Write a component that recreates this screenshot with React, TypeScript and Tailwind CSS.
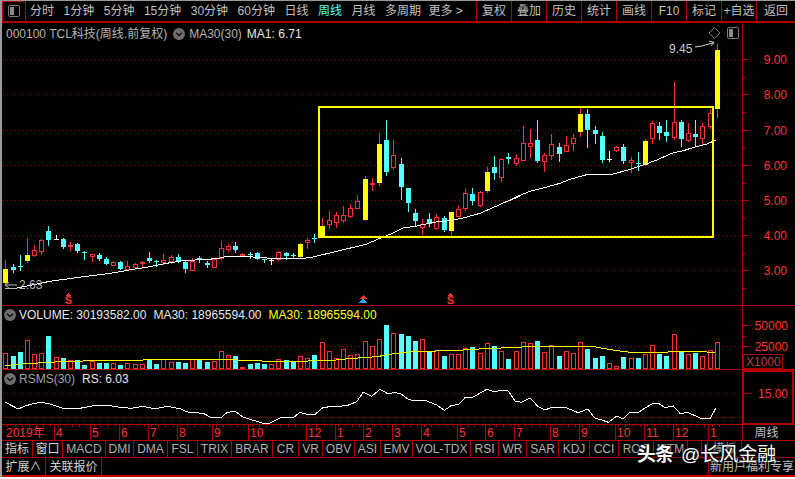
type CandleKind = 'y' | 'c' | 'r' | 'w';
type Row = [CandleKind, number, number, number, number];

// values were read off in 3x pixels, so each block keeps its own y origin
const block1: Row[] = [
  ['y',150,177,218,218],['c',162,172,180,186],['c',135,168,172,180],['y',84,135,152,155],['r',105,120,136,138],
  ['r',88,91,124,131],['c',48,63,90,105],['w',75,86,88,88],['c',85,87,110,114],['r',97,104,107,120],
  ['c',100,102,124,126],['c',124,126,128,146],['r',132,133,139,152],['c',130,135,147,150],['c',142,148,161,162],
  ['r',152,156,164,165],['c',153,156,176,178],['r',154,169,176,178],['r',160,161,171,175],['r',152,156,160,170],
  ['c',127,145,153,155],['c',150,152,154,168],['r',132,150,156,162],['r',135,142,152,160],['c',132,141,153,156],
  ['c',152,155,177,186],['r',143,152,179,180],['c',138,145,151,156],['c',152,160,165,171],['r',146,148,170,171],
  ['r',94,115,145,147],['r',103,108,117,124],['c',97,108,120,125],['r',128,131,134,138],['c',126,132,134,144],
  ['c',127,129,146,148],['c',147,148,150,156],['w',146,150,151,162],['r',124,127,147,149],['c',126,130,137,147],
  ['c',130,134,137,145],['y',100,103,141,142],['r',85,90,97,113],
];
const block2: Row[] = [
  ['c',402,414,418,425],['y',354,378,408,408],['r',333,361,371,384],['r',337,345,365,381],['r',318,345,359,365],
  ['r',312,324,347,350],['r',285,304,323,325],['y',228,237,360,360],['r',234,249,253,270],['y',99,132,249,255],
  ['c',60,120,216,225],['r',120,165,200,207],['c',174,192,261,297],['c',264,264,309,333],['c',327,339,363,378],
  ['r',357,372,380,402],['c',339,357,372,378],['r',342,351,384,387],['c',348,354,390,393],['y',336,336,393,408],
  ['r',318,327,347,349],['r',267,279,324,330],['c',264,282,303,312],['r',273,276,315,318],['y',201,216,273,276],
  ['c',168,201,219,237],['r',174,177,231,243],['c',159,171,177,189],
];
const block3: Row[] = [
  ['r',222,235,248,255],['r',138,189,239,240],['r',147,189,197,231],['c',120,180,243,246],['r',219,225,243,273],
  ['r',162,192,225,237],['c',189,201,222,243],['r',168,195,213,213],['r',162,174,189,210],['y',84,102,156,168],
  ['c',87,102,150,201],['c',138,150,162,189],['c',156,168,240,246],['w',213,238,240,243],['r',198,201,210,213],
  ['c',192,201,243,249],['r',231,240,246,276],['c',216,249,252,270],['y',177,183,255,255],['r',123,130,173,189],
  ['c',126,138,159,177],['c',120,156,168,183],['r',6,126,171,177],['c',120,126,177,198],['r',129,160,180,183],
  ['c',120,162,171,195],['r',129,138,174,192],['r',87,99,138,144],
];

const toPx = (rows: Row[], origin: number): Row[] =>
  rows.map(([k, a, b, c, d]) => [
    k,
    Math.round(origin + a / 3),
    Math.round(origin + b / 3),
    Math.round(origin + c / 3),
    Math.round(origin + d / 3),
  ]);

const candles: Row[] = [
  ...toPx(block1, 210),
  ...toPx(block2, 100),
  ...toPx(block3, 80),
  ['y', 44, 50, 109, 117],
];

const RED = '#ff3232';
const CYAN = '#54ffff';
const YELLOW = '#ffff00';
const LINE = '#b00000';
const DOT = '#a00000';

const xAt = (i: number) => Math.round(5.33 + 7.186 * i);

const maLine = [
  ...[[16,235],[46,235],[100,224],[150,214],[200,207],[250,200],[300,194],[350,187],[400,178],[450,170],[500,160],[550,152],[600,149],[650,146],[680,139],[730,140],[760,141],[800,144],[850,147],[890,146],[930,143]].map(([x, y]) => [x / 3, 210 + y / 3]),
  ...[[168,433],[210,415],[240,403],[280,384],[320,378],[370,367],[420,362],[460,354],[510,340],[560,318],[600,300],[630,289]].map(([x, y]) => [310 + x / 3, 100 + y / 3]),
  ...[[0,361],[30,346],[60,334],[100,324],[150,310],[180,298],[230,284],[300,284],[340,274],[370,265],[400,255],[440,240],[490,218],[520,212],[545,204],[590,192],[617,181]].map(([x, y]) => [510 + x / 3, 80 + y / 3]),
];

const volumes: [CandleKind, number][] = [
  ['r',160],['c',168],['c',156],['r',120],['r',163],['r',160],['c',108],['r',172],['c',175],['r',181],
  ['c',180],['c',195],['r',184],['c',189],['c',189],['r',189],['c',195],['r',189],['r',192],['r',192],
  ['c',177],['c',192],['r',178],['r',186],['c',186],['c',189],['r',178],['c',178],['c',186],['r',184],
  ['r',154],['r',166],['c',168],['y',201],['c',192],['c',189],['c',192],['r',192],['r',178],['c',181],
  ['c',184],['r',168],['r',174],['c',165],['r',127],['r',153],['r',175],['r',148],['r',166],['r',162],
  ['r',124],['r',138],['r',118],['c',75],['r',100],
  ['c',102],['c',108],['c',123],['r',118],['c',155],['r',150],['c',168],['r',162],['r',162],['r',145],
  ['c',141],['r',160],['r',130],['c',138],['r',153],['c',177],['r',153],['r',127],['r',130],['c',123],
  ['r',156],['r',135],['c',168],['r',153],['r',159],['r',127],['c',147],['c',174],['c',168],['r',190],
  ['r',199],['c',171],['r',175],['c',174],['r',162],['r',135],['c',162],['c',168],['r',102],['c',154],
  ['r',162],['c',159],['r',168],['r',150],['r',127],
];

const volMa = [
  ...[[16,197],[50,193],[100,190],[150,187],[200,184],[300,182],[400,181],[500,178],[700,178],[720,181],[780,182],[790,184],[900,184],[950,182],[1000,181],[1060,175],[1130,170],[1170,163]].map(([x, y]) => [x / 3, 300 + y / 3]),
  ...[[0,161],[30,157],[70,154],[180,152],[230,148],[300,145],[400,140],[590,139],[630,146],[680,154],[720,158],[820,156],[910,155],[960,157]].map(([x, y]) => [395 + x / 3, 300 + y / 3]),
];

const rsLine = [
  ...[[16,307],[30,314],[55,327],[75,318],[100,311],[125,307],[150,312],[190,325],[240,325],[280,317],[330,317],[360,322],[395,325],[430,319],[465,327],[500,319],[540,326],[565,337],[610,340],[630,351],[665,352],[680,338],[705,333],[730,352],[790,370],[810,369],[840,354],[880,353],[900,337],[920,343],[945,343],[970,322],[1040,317],[1070,305],[1090,276],[1115,289],[1140,268],[1165,282]].map(([x, y]) => [x / 3, 300 + y / 3]),
  ...[[0,277],[20,283],[40,298],[60,303],[90,301],[125,315],[148,331],[170,316],[190,314],[210,293],[235,291],[275,268],[300,276],[320,270],[340,273],[360,303],[380,307],[405,294],[430,320],[450,330],[470,322],[510,322],[550,338],[578,327],[600,355],[620,360],[640,367],[665,348],[685,357],[705,337],[730,337],[770,312],[790,310],[810,323],[835,318],[855,340],[880,338],[920,356],[945,357],[962,325]].map(([x, y]) => [395 + x / 3, 300 + y / 3]),
];

const pts = (list: number[][]) => list.map(([x, y]) => `${x.toFixed(1)},${y.toFixed(1)}`).join(' ');

const periods = ['分时', '1分钟', '5分钟', '15分钟', '30分钟', '60分钟', '日线', '周线', '月线', '多周期'];
const actions = ['复权', '叠加', '历史', '统计', '画线', 'F10', '标记', '+自选'];

const tabs = [
  { label: '指标', w: 'w-[31px]', bright: true },
  { label: '窗口', w: 'w-[30px]', bright: true },
  { label: 'MACD', w: 'w-[43px]' },
  { label: 'DMI', w: 'w-[28px]' },
  { label: 'DMA', w: 'w-[34px]' },
  { label: 'FSL', w: 'w-[30px]' },
  { label: 'TRIX', w: 'w-[34px]' },
  { label: 'BRAR', w: 'w-[41px]' },
  { label: 'CR', w: 'w-[26px]' },
  { label: 'VR', w: 'w-[24px]' },
  { label: 'OBV', w: 'w-[32px]' },
  { label: 'ASI', w: 'w-[26px]' },
  { label: 'EMV', w: 'w-[32px]' },
  { label: 'VOL-TDX', w: 'w-[58px]' },
  { label: 'RSI', w: 'w-[28px]' },
  { label: 'WR', w: 'w-[28px]' },
  { label: 'SAR', w: 'w-[32px]' },
  { label: 'KDJ', w: 'w-[31px]' },
  { label: 'CCI', w: 'w-[29px]' },
  { label: 'ROC', w: 'w-[35px]' },
  { label: 'MTM', w: 'w-[34px]' },
  { label: '', w: 'w-[14px]' },
  { label: '', w: 'w-[6px]' },
  { label: '模板', w: 'w-[34px]' },
];

const months: [string, number][] = [
  ['4',54],['5',90],['6',119],['7',148],['8',177],['9',212],['10',248],['12',306],['1',335],['2',363],['3',392],
  ['4',421],['5',457],['6',485],['7',514],['8',550],['9',579],['10',615],['11',644],['12',673],['1',708],
];

function CircleChevron() {
  return (
    <svg width="12" height="12" viewBox="0 0 12 12" className="shrink-0">
      <circle cx="6" cy="6" r="6" fill="#6e6e6e" />
      <path d="M3 4.8 6 7.6 9 4.8" fill="none" stroke="#111" strokeWidth="1.4" />
    </svg>
  );
}

function PanelIcon({ size = 12 }: { size?: number }) {
  return (
    <svg width={size} height={size} viewBox="0 0 12 12" className="shrink-0">
      <rect x="0.5" y="0.5" width="11" height="11" rx="1.5" fill="none" stroke="#7a7a7a" />
      <rect x="2" y="2" width="4" height="8" fill="#8a8a8a" />
    </svg>
  );
}

function Candle({ row, i }: { row: Row; i: number }) {
  const [kind, hi, top, bot, lo] = row;
  const x = xAt(i);
  const wick = kind === 'c' ? CYAN : kind === 'w' ? '#ffffff' : RED;
  if (kind === 'w') {
    return (
      <g>
        <rect x={x} y={hi} width="1" height={lo - hi + 1} fill={wick} />
        <rect x={x - 2} y={top} width="5" height="1" fill={wick} />
      </g>
    );
  }
  return (
    <g>
      <rect x={x} y={hi} width="1" height={lo - hi + 1} fill={wick} />
      {kind === 'r' ? (
        <rect x={x - 1.5} y={top + 0.5} width="4" height={Math.max(bot - top, 1)} fill="#000" stroke={RED} />
      ) : (
        <rect x={x - 2} y={top} width="5" height={Math.max(bot - top, 1)} fill={kind === 'y' ? YELLOW : CYAN} />
      )}
    </g>
  );
}

function MainChart() {
  return (
    <svg viewBox="2 23 793 282" className="h-full w-full" shapeRendering="crispEdges">
      {[59, 94, 130, 165, 200, 235, 270].map((y) => (
        <line key={y} x1="3" x2="742" y1={y + 0.5} y2={y + 0.5} stroke={DOT} strokeDasharray="1 3" />
      ))}
      <line x1="742.5" x2="742.5" y1="23" y2="305" stroke={LINE} />
      {[
        ['9.00', 59], ['8.00', 94], ['7.00', 130], ['6.00', 165], ['5.00', 200], ['4.00', 235], ['3.00', 270],
      ].map(([t, y]) => (
        <g key={t}>
          <line x1="743" x2="749" y1={Number(y) + 0.5} y2={Number(y) + 0.5} stroke={LINE} />
          <line x1="743" x2="746" y1={Number(y) + 18.5} y2={Number(y) + 18.5} stroke={LINE} />
          <text x="787" y={Number(y) + 4.5} textAnchor="end" fontSize="12" fill={RED} shapeRendering="auto">{t}</text>
        </g>
      ))}
      {candles.map((row, i) => (
        <Candle key={i} row={row} i={i} />
      ))}
      <polyline points={pts(maLine)} fill="none" stroke="#ffffff" strokeWidth="1" />
      <rect x="319" y="107" width="393.5" height="130" fill="none" stroke={YELLOW} strokeWidth="2" />

      <text x="669" y="53" fontSize="12" fill="#c8c8c8" shapeRendering="auto">9.45</text>
      <path d="M695 47 702 46 714 42.5 709 41M714 42.5 711 46" fill="none" stroke="#d8d8d8" shapeRendering="auto" />
      <path d="M714.5 27.5 720 33 714.5 38.5 709 33Z" fill="none" stroke="#7a7a7a" shapeRendering="auto" />

      <path d="M5 285H17M5 285 9 282M5 285 9 288M5 288.5H16" fill="none" stroke="#b8b8b8" shapeRendering="auto" />
      <text x="19" y="289" fontSize="12" fill="#b8b8b8" shapeRendering="auto">2.63</text>

      <g fill={RED}>
        <polygon points="68.5,293 71,296 66,296" />
        <text x="68.5" y="304" fontSize="11" fontWeight="700" textAnchor="middle" shapeRendering="auto">S</text>
        <polygon points="450.5,293 453,296 448,296" />
        <text x="450.5" y="304" fontSize="11" fontWeight="700" textAnchor="middle" shapeRendering="auto">S</text>
        <polygon points="363,295 367,299 359,299" />
      </g>
      <polygon points="363,299 367.5,303 358.5,303" fill="#2aa8ff" />
    </svg>
  );
}

function VolumeChart() {
  const base = 369;
  return (
    <svg viewBox="2 306 793 63" className="h-full w-full" shapeRendering="crispEdges">
      <line x1="3" x2="742" y1="346.5" y2="346.5" stroke={DOT} strokeDasharray="1 3" />
      <line x1="742.5" x2="742.5" y1="306" y2="369" stroke={LINE} />
      {volumes.map(([kind, v], i) => {
        const top = Math.round(300 + v / 3);
        const x = xAt(i);
        if (kind === 'r') {
          return <rect key={i} x={x - 1.5} y={top + 0.5} width="4" height={base - top - 1} fill="#000" stroke={RED} />;
        }
        return <rect key={i} x={x - 2} y={top} width="5" height={base - top} fill={kind === 'c' ? CYAN : RED} />;
      })}
      <polyline points={pts(volMa)} fill="none" stroke={YELLOW} strokeWidth="1" />
      <line x1="743" x2="749" y1="325.5" y2="325.5" stroke={LINE} />
      <line x1="743" x2="746" y1="336.5" y2="336.5" stroke={LINE} />
      <line x1="743" x2="749" y1="346.5" y2="346.5" stroke={LINE} />
      <text x="788" y="329.5" textAnchor="end" fontSize="12" fill={RED} shapeRendering="auto">50000</text>
      <text x="788" y="351" textAnchor="end" fontSize="12" fill={RED} shapeRendering="auto">25000</text>
      <rect x="743.5" y="354.5" width="39" height="14" fill="#000" stroke={LINE} />
      <text x="746" y="366" fontSize="12" fill="#b84040" shapeRendering="auto">X1000</text>
    </svg>
  );
}

function RsChart() {
  return (
    <svg viewBox="2 370 793 54" className="h-full w-full" shapeRendering="crispEdges">
      <line x1="3" x2="742" y1="393.5" y2="393.5" stroke={DOT} strokeDasharray="1 3" />
      <line x1="3" x2="742" y1="417.5" y2="417.5" stroke={DOT} strokeDasharray="1 1" />
      <polyline points={pts(rsLine)} fill="none" stroke="#ffffff" strokeWidth="1" />
      <rect x="743" y="370.5" width="50" height="53" fill="none" stroke={LINE} strokeWidth="2" />
      <line x1="744" x2="750" y1="393.5" y2="393.5" stroke={LINE} />
      <text x="788" y="398" textAnchor="end" fontSize="12" fill={RED} shapeRendering="auto">15.00</text>
    </svg>
  );
}

function DateAxis() {
  return (
    <svg viewBox="2 426 740 15" className="h-full w-full" shapeRendering="crispEdges">
      {candles.map((_, i) => (
        <rect key={i} x={xAt(i) + 2} y="426" width="1" height="2" fill={LINE} />
      ))}
      <text x="6" y="438" fontSize="12" fill={RED} fontFamily="'Liberation Sans','Noto Sans CJK SC',sans-serif" shapeRendering="auto">2019年</text>
      {months.map(([m, x]) => (
        <g key={x}>
          <rect x={x} y="426" width="1" height="15" fill={LINE} />
          <text x={x + 2} y="438" fontSize="12" fill={RED} shapeRendering="auto">{m}</text>
        </g>
      ))}
    </svg>
  );
}

export default function App() {
  return (
    <div className="relative h-[479px] w-[795px] overflow-hidden bg-white font-['Liberation_Sans','Noto_Sans_CJK_SC',sans-serif] text-xs">
      <div className="h-[477px] border-l-2 border-t border-[#9a9a9a] bg-black text-[#c0c0c0]">
        {/* top toolbar */}
        <div className="flex h-[22px] items-center border-b-2 border-[#b00000]">
          <div className="flex h-full w-[24px] items-center justify-center border-l border-r border-t border-[#b00000] pb-px">
            <PanelIcon />
          </div>
          <div className="flex flex-1 items-center gap-[9.5px] whitespace-nowrap pl-[4px]">
            {periods.map((p) => (
              <span key={p} className={p === '周线' ? 'text-[#54ffff]' : ''}>{p}</span>
            ))}
            <span className="-ml-[2px]">更多 &gt;</span>
          </div>
          {actions.map((a) => (
            <div key={a} className="flex h-full w-[35px] items-center justify-center border-l border-[#b00000] whitespace-nowrap">{a}</div>
          ))}
          <div className="flex h-full w-[39px] items-center justify-center border-l border-[#b00000]">返回</div>
        </div>

        {/* price panel */}
        <div className="relative h-[283px] border-b border-[#b00000]">
          <MainChart />
          <div className="absolute left-[4px] top-[3px] flex items-center whitespace-nowrap text-[#b4b4b4]">
            <span>000100 TCL科技(周线.前复权)</span>
            <span className="ml-[6px]"><CircleChevron /></span>
            <span className="ml-[4px]">MA30(30)</span>
            <span className="ml-[5px] text-[#e8e8e8]">MA1: 6.71</span>
          </div>
          <div className="absolute left-[725px] top-[4px]">
            <PanelIcon />
          </div>
        </div>

        {/* volume panel */}
        <div className="relative h-[64px] border-b border-[#b00000]">
          <VolumeChart />
          <div className="absolute left-[2px] top-px flex items-center gap-[7px] whitespace-nowrap text-[#e8e8e8]">
            <CircleChevron />
            <span className="-ml-[4px]">VOLUME: 30193582.00</span>
            <span>MA30: 18965594.00</span>
            <span className="text-[#ffff00]">MA30: 18965594.00</span>
          </div>
        </div>

        {/* RSMS panel */}
        <div className="relative h-[55px] border-b border-[#b00000]">
          <RsChart />
          <div className="absolute left-[2px] top-[1px] flex items-center gap-[7px] whitespace-nowrap">
            <CircleChevron />
            <span className="-ml-[4px] text-[#a0a0a0]">RSMS(30)</span>
            <span className="text-[#e8e8e8]">RS: 6.03</span>
          </div>
        </div>

        {/* date axis */}
        <div className="flex h-[16px] border-b border-[#b00000]">
          <div className="w-[740px]">
            <DateAxis />
          </div>
          <div className="flex flex-1 items-center justify-center border-l border-[#b00000] pr-[5px]">周线</div>
        </div>

        {/* indicator tabs */}
        <div className="flex h-[17px] border-b border-[#b00000] text-[#b0b0b0]">
          {tabs.map((t, i) => (
            <div key={i} className={`flex items-center justify-center whitespace-nowrap border-r border-[#b00000] ${t.w} ${t.bright ? 'text-[#d4d4d4]' : ''}`}>
              {t.label}
            </div>
          ))}
          <div className="flex-1" />
        </div>

        {/* bottom row */}
        <div className="flex h-[19px] border-b-2 border-[#d00000]">
          <div className="flex w-[44px] items-center justify-center border-r border-[#b00000] text-[#d4d4d4]">扩展∧</div>
          <div className="flex w-[56px] items-center justify-center border-r border-[#b00000] text-[#d4d4d4]">关联报价</div>
          <div className="flex-1" />
          <div className="flex w-[87px] items-center justify-center border-l border-[#b00000] whitespace-nowrap">新用户福利专享</div>
        </div>
      </div>

      {/* watermark */}
      <div className="absolute left-[637px] top-[443px] flex items-center whitespace-nowrap text-[19px] leading-[24px] font-bold text-white [text-shadow:0_0_2px_#000,0_0_3px_#000]">
        <span className="w-[18px] overflow-visible">头</span>
        <span>条</span>
        <span className="ml-[7px] font-normal">@长风金融</span>
      </div>
    </div>
  );
}
